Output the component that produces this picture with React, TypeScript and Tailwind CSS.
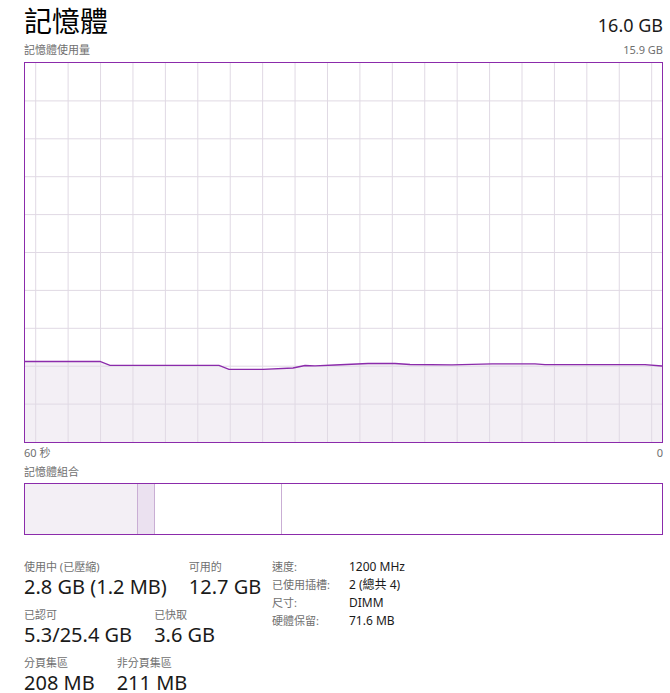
import React from "react";

const W = 637;
const H = 379;

// usage line, in chart coordinates (inside the border)
const points: [number, number][] = [
  [0, 298.5],
  [75, 298.5],
  [85, 302.3],
  [194, 302.3],
  [204, 306.3],
  [238, 306.3],
  [268, 305],
  [280, 302.5],
  [290, 302.8],
  [310, 302],
  [343, 300.5],
  [370, 300.5],
  [385, 301.5],
  [427, 301.8],
  [467, 300.8],
  [510, 300.8],
  [520, 301.7],
  [620, 301.7],
  [637, 303],
];

function UsageChart() {
  const vLines = Array.from({ length: 20 }, (_, i) => 10.7 + i * 32.42);
  const hLines = Array.from({ length: 9 }, (_, i) => (i + 1) * 37.9);
  const line = points.map(([x, y]) => `${x},${y}`).join(" ");
  const area = `0,${H} ${line} ${W},${H}`;

  return (
    <div className="border border-[#8b2bab] h-[381px] w-full">
      <svg width="100%" height={H} viewBox={`0 0 ${W} ${H}`} preserveAspectRatio="none" className="block">
        <polygon points={area} fill="#f3eff5" />
        {vLines.map((x, i) => (
          <line key={"v" + i} x1={x} x2={x} y1={0} y2={H} stroke="#e0d9e4" strokeWidth={1} />
        ))}
        {hLines.map((y, i) => (
          <line key={"h" + i} x1={0} x2={W} y1={y} y2={y} stroke="#e0d9e4" strokeWidth={1} />
        ))}
        <polyline points={line} fill="none" stroke="#8b2bab" strokeWidth={1.3} />
      </svg>
    </div>
  );
}

function Stat({ label, value }: { label: string; value: string }) {
  return (
    <div className="flex flex-col">
      <span className="text-[11px] leading-[15px] text-[#6f6f6f]">{label}</span>
      <span className="text-[20px] leading-[26px] text-[#1a1a1a]">{value}</span>
    </div>
  );
}

export default function App() {
  const details = [
    ["速度:", "1200 MHz"],
    ["已使用插槽:", "2 (總共 4)"],
    ["尺寸:", "DIMM"],
    ["硬體保留:", "71.6 MB"],
  ];

  return (
    <div className="w-[670px] h-[693px] bg-white pl-[24px] pr-[7px] font-['Noto_Sans','Noto_Sans_CJK_TC',sans-serif] overflow-hidden">
      <div className="flex items-baseline justify-between pt-[2px]">
        <h1 className="text-[28px] leading-[38px] text-black">記憶體</h1>
        <span className="text-[18px] text-[#1a1a1a]">16.0 GB</span>
      </div>
      <div className="flex justify-between text-[11px] leading-[16px] text-[#6f6f6f] mt-[2px]">
        <span>記憶體使用量</span>
        <span>15.9 GB</span>
      </div>
      <div className="mt-[4px]">
        <UsageChart />
      </div>
      <div className="flex justify-between text-[11px] leading-[16px] text-[#6f6f6f] mt-[2px]">
        <span>60 秒</span>
        <span>0</span>
      </div>
      <div className="text-[11px] leading-[16px] text-[#6f6f6f] mt-[3px]">記憶體組合</div>
      <div className="mt-[3px] flex h-[52px] border border-[#8b2bab]">
        <div className="w-[113px] bg-[#f3eff5] border-r border-[#c9aed4]" />
        <div className="w-[17px] bg-[#ebe1f0] border-r border-[#c9aed4]" />
        <div className="w-[127px] bg-white border-r border-[#c9aed4]" />
        <div className="flex-1 bg-white" />
      </div>
      <div className="mt-[24px] flex">
        <div className="w-[248px] flex flex-col gap-[7px]">
          <div className="flex gap-[22px]">
            <Stat label="使用中 (已壓縮)" value="2.8 GB (1.2 MB)" />
            <Stat label="可用的" value="12.7 GB" />
          </div>
          <div className="flex gap-[22px]">
            <Stat label="已認可" value="5.3/25.4 GB" />
            <Stat label="已快取" value="3.6 GB" />
          </div>
          <div className="flex gap-[22px]">
            <Stat label="分頁集區" value="208 MB" />
            <Stat label="非分頁集區" value="211 MB" />
          </div>
        </div>
        <div className="grid grid-cols-[77px_auto] auto-rows-[18px] text-[12px] leading-[16px]">
          {details.map(([k, v]) => (
            <React.Fragment key={k}>
              <span className="text-[#6f6f6f] text-[11px]">{k}</span>
              <span className="text-[#1a1a1a]">{v}</span>
            </React.Fragment>
          ))}
        </div>
      </div>
    </div>
  );
}
